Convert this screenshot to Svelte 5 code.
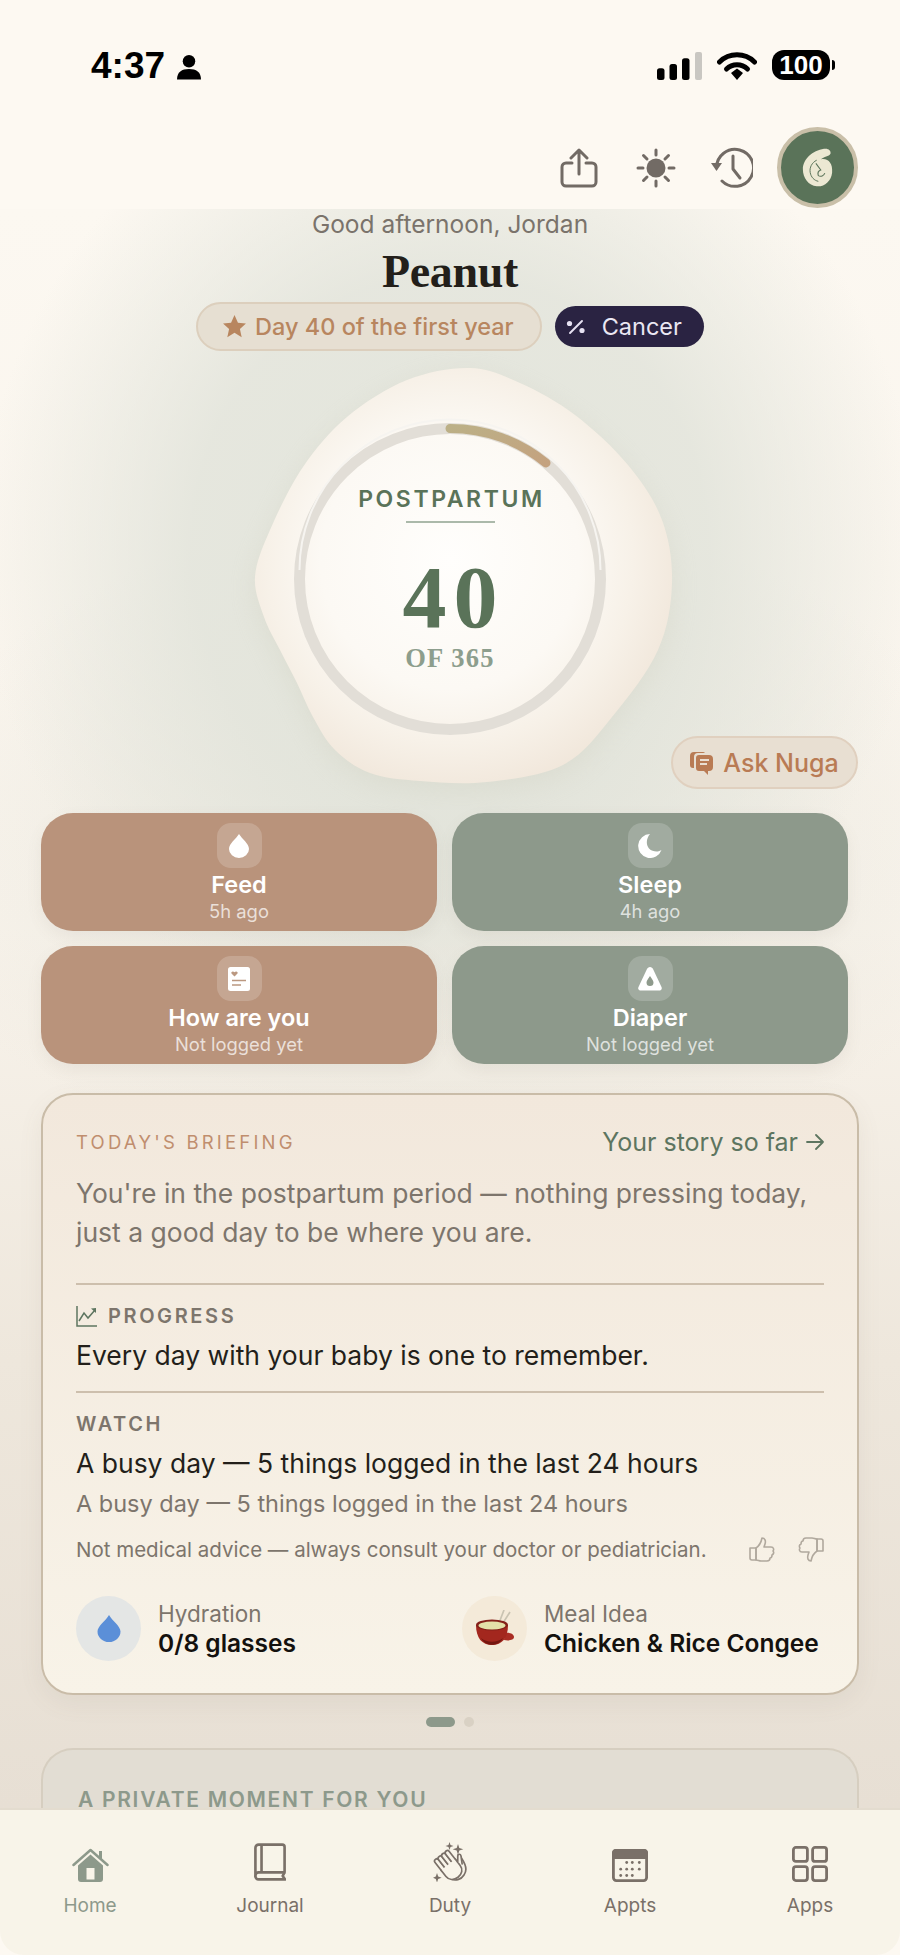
<script>
  const blobPts = [[470,368],[520,383],[575,415],[628,465],[662,520],[672,583],[658,650],[612,717],[563,765],[487,782],[420,781],[370,773],[335,750],[313,717],[297,683],[280,650],[264,617],[255,577],[270,530],[303,467],[347,417],[407,380]];
  function smooth(pts) {
    const n = pts.length;
    let d = `M${pts[0][0]} ${pts[0][1]}`;
    for (let i = 0; i < n; i++) {
      const p0 = pts[(i - 1 + n) % n], p1 = pts[i], p2 = pts[(i + 1) % n], p3 = pts[(i + 2) % n];
      const c1 = [p1[0] + (p2[0] - p0[0]) / 6, p1[1] + (p2[1] - p0[1]) / 6];
      const c2 = [p2[0] - (p3[0] - p1[0]) / 6, p2[1] - (p3[1] - p1[1]) / 6];
      d += `C${c1[0].toFixed(1)} ${c1[1].toFixed(1)} ${c2[0].toFixed(1)} ${c2[1].toFixed(1)} ${p2[0]} ${p2[1]}`;
    }
    return d + 'Z';
  }
  const blobPath = smooth(blobPts);
  const fingers = [8, 12.5, 17, 21.5];
  const apptDots = [[14.7,12],[20.3,12],[27.3,12],[8.7,18.7],[14.7,18.7],[20.3,18.7],[27.3,18.7],[8.7,25],[14.7,25],[20.3,25]];
</script>

<div class="page">
  <header class="top">
    <div class="status">
      <div class="time"><span>4:37</span>
        <svg width="24" height="26" viewBox="0 0 25 26"><circle cx="12.5" cy="7" r="6.5" fill="#000"/><path d="M0 26c0-8 5-11 12.5-11S25 18 25 26z" fill="#000"/></svg>
      </div>
      <div class="sys">
        <svg width="45" height="28" viewBox="0 0 45 28"><rect x="0" y="16.300" width="7.500" height="11.700" rx="2.500" fill="#000"/><rect x="12.500" y="12" width="7.500" height="16" rx="2.500" fill="#000"/><rect x="25" y="6.300" width="7.500" height="21.700" rx="2.500" fill="#000"/><rect x="38" y="0" width="7" height="28" rx="2" fill="#c9c7c2"/></svg>
        <svg width="40" height="28" viewBox="0 0 40 28"><path d="M2.500 10a25 25 0 0 1 35 0" fill="none" stroke="#000" stroke-width="5" stroke-linecap="round"/><path d="M9.500 17a15 15 0 0 1 21 0" fill="none" stroke="#000" stroke-width="5" stroke-linecap="round"/><path d="M14 21l6-4.500 6 4.500-6 7z" fill="#000"/></svg>
        <div class="batt"><span>100</span></div>
      </div>
    </div>
    <div class="tools">
      <svg class="t-share" width="38" height="40" viewBox="0 0 38 40" fill="none" stroke="#726b65" stroke-width="3" stroke-linecap="round" stroke-linejoin="round"><path d="M12 15H6a4 4 0 0 0-4 4v15a4 4 0 0 0 4 4h26a4 4 0 0 0 4-4V19a4 4 0 0 0-4-4h-6"/><path d="M19 26V3M11 10l8-8 8 8"/></svg>
      <svg class="t-sun" width="40" height="40" viewBox="0 0 40 40" fill="none" stroke="#726b65" stroke-width="3" stroke-linecap="round"><circle cx="20" cy="20" r="9.500" fill="#726b65" stroke="none"/><path d="M20 2v5M20 33v5M2 20h5M33 20h5M7.500 7.500l3.500 3.500M29 29l3.500 3.500M7.500 32.500L11 29M29 11l3.500-3.500"/></svg>
      <svg class="t-hist" width="42" height="42" viewBox="0 0 42 42" fill="none" stroke="#726b65" stroke-width="3" stroke-linecap="round" stroke-linejoin="round"><path d="M5.500 21A18.500 18.500 0 1 1 11 34"/><path d="M22 9v13l7 9"/><path d="M0 16h11l-5.500 8z" fill="#726b65" stroke="none"/></svg>
      <div class="avatar">
        <svg width="31" height="39" viewBox="0 0 38 48"><path d="M27 1c5-1 9 2 8 6-2 4-8 3-12 7 9-2 15 5 14 16-1 11-10 18-19 17C8 46 1 37 1 26 1 14 13 3 27 1z" fill="#ece8d3"/><path d="M18 15c-6 3-9 9-8 15 1 6 5 10 10 11" fill="none" stroke="#5a7359" stroke-width="1.200"/><path d="M17 19l6 8c-3 1-4 4-3 7 3 2 7 0 8-3" fill="none" stroke="#5a7359" stroke-width="1.300"/></svg>
      </div>
    </div>
  </header>

  <main class="scroll">
    <div class="hello">
      <p class="greet">Good afternoon, Jordan</p>
      <h1 class="name">Peanut</h1>
      <div class="pills">
        <div class="pill-day">
          <svg width="25" height="25" viewBox="0 0 24 24"><path d="M12 1l3.300 7.300 7.700.8-5.800 5.300 1.700 8L12 18l-6.900 4.400 1.700-8L1 9.100l7.700-.8z" fill="#b8865f"/></svg>
          <span>Day 40 of the first year</span>
        </div>
        <div class="pill-sign">
          <svg width="20" height="16" viewBox="0 0 20 16" fill="none" stroke="#e7e2f2" stroke-width="1.900" stroke-linecap="round"><circle cx="3.500" cy="4.500" r="2.600" fill="#e7e2f2" stroke="none"/><circle cx="16" cy="11.500" r="2.600" fill="#e7e2f2" stroke="none"/><path d="M16 2L4 14"/></svg>
          <span>Cancer</span>
        </div>
      </div>
    </div>

    <section class="hero">
      <svg class="blob" width="900" height="470" viewBox="0 340 900 470">
        <defs>
          <radialGradient id="bf" gradientUnits="userSpaceOnUse" cx="450" cy="560" r="235">
            <stop offset="0" stop-color="#fffefc"/>
            <stop offset=".55" stop-color="#fcf9f4"/>
            <stop offset=".78" stop-color="#f7f1e8"/>
            <stop offset="1" stop-color="#f1e7db"/>
          </radialGradient>
          <linearGradient id="arc" x1="0" x2="1" y1="0" y2="1">
            <stop offset="0" stop-color="#bcb087"/>
            <stop offset="1" stop-color="#c4a27f"/>
          </linearGradient>
          <filter id="sh" x="-20%" y="-20%" width="140%" height="140%"><feGaussianBlur stdDeviation="14"/></filter>
        </defs>
        <path d={blobPath} fill="#c9c9b8" opacity=".3" transform="translate(0 8)" filter="url(#sh)"/>
        <path d={blobPath} fill="url(#bf)"/>
        <circle cx="450" cy="579" r="150.500" fill="none" stroke="#e2ded7" stroke-width="11"/>
        <path d="M299.500 570A150.500 150.500 0 0 1 600.500 570" fill="none" stroke="#f6f4f0" stroke-width="2"/>
        <path d="M450 428.500A150.500 150.500 0 0 1 546 463" fill="none" stroke="url(#arc)" stroke-width="9" stroke-linecap="round"/>
      </svg>
      <div class="dial">
        <div class="phase">POSTPARTUM</div>
        <div class="rule"></div>
        <div class="num">40</div>
        <div class="of">OF 365</div>
      </div>
      <button class="ask">
        <svg width="23" height="24" viewBox="0 0 23 24"><path d="M4 1h9a3 3 0 0 1 2 1H8a4 4 0 0 0-4 4v11H3a3 3 0 0 1-3-3V5a4 4 0 0 1 4-4z" fill="#b97b54"/><path d="M9 4h10a4 4 0 0 1 4 4v8a4 4 0 0 1-4 4h-1v4l-4-4H9a3 3 0 0 1-3-3V7a3 3 0 0 1 3-3z" fill="#b97b54"/><path d="M10 9h9M10 13h7" stroke="#eadfd2" stroke-width="2"/></svg>
        <span>Ask Nuga</span>
      </button>
    </section>

    <section class="actions">
      <div class="act terra">
        <div class="ico"><svg width="22" height="24" viewBox="0 0 22 24"><path d="M11 0c3 5 10 9.500 10 15a10 9 0 0 1-20 0C1 9.500 8 5 11 0z" fill="#fff"/></svg></div>
        <div class="lbl">Feed</div><div class="sub">5h ago</div>
      </div>
      <div class="act sage">
        <div class="ico"><svg width="24" height="24" viewBox="0 0 24 24"><path d="M12 0a12 12 0 1 0 11.500 16C21 18 15 18.500 11 14.500 7.500 10.500 8.500 4 12 0z" fill="#fff"/></svg></div>
        <div class="lbl">Sleep</div><div class="sub">4h ago</div>
      </div>
      <div class="act terra">
        <div class="ico"><svg width="22" height="24" viewBox="0 0 22 24"><rect width="22" height="24" rx="2.500" fill="#fff"/><path d="M6.500 9.500L3.500 6.500c-1-1.500 1.500-3 3-1.200C8 3.500 10.500 5 9.500 6.500z" fill="#bb9880"/><path d="M4 13.500h14M4 18h9" stroke="#bb9880" stroke-width="1.600"/></svg></div>
        <div class="lbl">How are you</div><div class="sub">Not logged yet</div>
      </div>
      <div class="act sage">
        <div class="ico"><svg width="24" height="24" viewBox="0 0 24 24"><path d="M12 0c1.500 0 2.500 1 3 2l8.500 18c.8 2-.5 3.500-2.500 3.500H3c-2 0-3.300-1.500-2.500-3.500L9 2c.5-1 1.500-2 3-2z" fill="#fff"/><path d="M12 9c1.500 2.500 3.500 4.500 3.500 6.500a3.500 3.500 0 0 1-7 0C8.500 13.500 10.500 11.500 12 9z" fill="#8e9a8c"/></svg></div>
        <div class="lbl">Diaper</div><div class="sub">Not logged yet</div>
      </div>
    </section>

    <section class="brief">
      <div class="brief-head">
        <span class="eyebrow">TODAY'S BRIEFING</span>
        <span class="story">Your story so far <svg width="18" height="16" viewBox="0 0 18 16" fill="none" stroke="#5d7560" stroke-width="1.800" stroke-linecap="round" stroke-linejoin="round"><path d="M1 8h16M10 1l7 7-7 7"/></svg></span>
      </div>
      <p class="lead">You're in the postpartum period — nothing pressing today, just a good day to be where you are.</p>
      <div class="block progress">
        <div class="kicker">
          <svg width="21" height="21" viewBox="0 0 21 21" fill="none" stroke="#5d7560" stroke-width="1.500"><path d="M1 0v20h20"/><path d="M3 15l5-8 4 5 7-8"/><path d="M15 2.500l5-.5v5z" fill="#5d7560" stroke="none"/></svg>
          <span>PROGRESS</span>
        </div>
        <p class="main">Every day with your baby is one to remember.</p>
      </div>
      <div class="block watch">
        <div class="kicker"><span>WATCH</span></div>
        <p class="main">A busy day — 5 things logged in the last 24 hours</p>
        <p class="second">A busy day — 5 things logged in the last 24 hours</p>
      </div>
      <div class="note">
        <span>Not medical advice — always consult your doctor or pediatrician.</span>
        <div class="thumbs">
          <svg width="26" height="25" viewBox="0 0 26 25" fill="none" stroke="#b0a89d" stroke-width="1.600" stroke-linejoin="round"><path d="M7 11c3-2 5-5 6-10 3 0 4 3 3 6l-1 3h7c3 0 3 3 2 4 1 1 1 3-1 4 0 2-1 3-2 3 0 2-1 3-3 3H12c-2 0-3-1-5-1z"/><path d="M1 11h6v12H3c-1 0-2-1-2-2z"/></svg>
          <svg width="26" height="25" viewBox="0 0 26 25" fill="none" stroke="#b0a89d" stroke-width="1.600" stroke-linejoin="round"><path d="M19 14c-3 2-5 5-6 10-3 0-4-3-3-6l1-3H4c-3 0-3-3-2-4-1-1-1-3 1-4 0-2 1-3 2-3 0-2 1-3 3-3h6c2 0 3 1 5 1z"/><path d="M25 14h-6V2h4c1 0 2 1 2 2z"/></svg>
        </div>
      </div>
      <div class="tips">
        <div class="tip">
          <div class="bub water"><svg width="24" height="27" viewBox="0 0 24 27"><path d="M12 0c3 5.500 11.500 11 11.500 16.500a11.500 10.500 0 0 1-23 0C.5 11 9 5.500 12 0z" fill="#5b8fd8"/></svg></div>
          <div class="tip-txt"><div class="t1">Hydration</div><div class="t2">0/8 glasses</div></div>
        </div>
        <div class="tip meal">
          <div class="bub food">
            <svg width="40" height="38" viewBox="0 0 40 38">
              <path d="M24 13l5-13M28 13l7-11" stroke="#c9c3b2" stroke-width="1.700"/>
              <path d="M30 23c4-1 9 1 9 4s-5 4-10 3z" fill="#a92d24"/>
              <path d="M1 15c0 13 6 20 16 20s16-7 16-20z" fill="#a3271e"/>
              <path d="M6 28c6 5 16 5 22 0-4 9-18 9-22 0z" fill="#741711"/>
              <ellipse cx="17" cy="15" rx="16" ry="5.500" fill="#842019"/>
              <ellipse cx="17" cy="15.500" rx="13.500" ry="4" fill="#e4e0a8"/>
            </svg>
          </div>
          <div class="tip-txt"><div class="t1">Meal Idea</div><div class="t2">Chicken &amp; Rice Congee</div></div>
        </div>
      </div>
    </section>

    <div class="dots"><i class="on"></i><i></i></div>

    <section class="moment">
      <div class="moment-t">A PRIVATE MOMENT FOR YOU</div>
    </section>
  </main>

  <nav class="tabs">
    <div class="tab home">
      <svg width="37" height="34" viewBox="0 0 37 34"><path d="M1.500 17L18.500 2 35.500 17" fill="none" stroke="#8d998b" stroke-width="2.500" stroke-linejoin="round" stroke-linecap="round"/><rect x="27" y="3" width="3" height="8" fill="#8d998b"/><path d="M6 17.500L18.500 6.500 31 17.500V31a3 3 0 0 1-3 3H9a3 3 0 0 1-3-3z" fill="#8d998b"/><rect x="14.500" y="20" width="8" height="11.500" fill="#f8f4e9"/></svg>
      <span>Home</span>
    </div>
    <div class="tab">
      <svg width="32" height="40" viewBox="0 0 34 40" fill="none" stroke="#7a7068" stroke-width="2.800" stroke-linejoin="round"><path d="M5 1.500h25a2.500 2.500 0 0 1 2.500 2.500V31H5a3.500 3.500 0 0 0-3.500 3.500V5A3.500 3.500 0 0 1 5 1.500z"/><path d="M8 2v29"/><path d="M1.500 34.500A3.500 3.500 0 0 0 5 38.500h28l-2.500-3.700 2-3.800"/></svg>
      <span>Journal</span>
    </div>
    <div class="tab">
      <svg width="35" height="40" viewBox="0 0 35 40" fill="none" stroke="#7a7068" stroke-width="1.700" stroke-linejoin="round" stroke-linecap="round">
        <path d="M25 13c2 0 3 2 4 4 4 6 5 12 2 16-3 5-9 6-13 4"/>
        <g transform="rotate(-38 17 25)">
          {#each fingers as x}<rect x={x} y="10" width="4.500" height="15" rx="2.250" fill="#f8f4e9"/>{/each}
          <path d="M8 22v8c0 5 4 8 9 8s9-3 9-8v-8" fill="#f8f4e9"/>
          <path d="M26 26l4-5c1.500-1.500 3.500 0 2.500 2l-4 7" fill="#f8f4e9"/>
        </g>
        <path d="M16.500 0l1 3 3 1-3 1-1 3-1-3-3-1 3-1z" fill="#7a7068" stroke="none"/>
        <path d="M25 2l1.300 4 4 1.300-4 1.300-1.300 4.400-1.300-4.400-4-1.300 4-1.300z" fill="#7a7068" stroke="none"/>
        <path d="M4 31l1.200 3.500 3.500 1.200-3.500 1.200L4 40.500l-1.200-3.600-2.800-1.200 2.800-1.200z" fill="#7a7068" stroke="none"/>
      </svg>
      <span>Duty</span>
    </div>
    <div class="tab">
      <svg width="36" height="33" viewBox="0 0 36 33"><path d="M4 0h28a4 4 0 0 1 4 4v6H0V4a4 4 0 0 1 4-4z" fill="#7a7068"/><rect x="1.400" y="1.400" width="33.200" height="30.200" rx="3" fill="none" stroke="#7a7068" stroke-width="2.800"/>{#each apptDots as d}<circle cx={d[0]} cy={d[1] + 1.500} r="1.400" fill="#7a7068"/>{/each}</svg>
      <span>Appts</span>
    </div>
    <div class="tab">
      <svg width="36" height="36" viewBox="0 0 36 36" fill="none" stroke="#7a7068" stroke-width="2.800"><rect x="1.400" y="1.400" width="14" height="14" rx="2.500"/><rect x="20.600" y="1.400" width="14" height="14" rx="2.500"/><rect x="1.400" y="20.600" width="14" height="14" rx="2.500"/><rect x="20.600" y="20.600" width="14" height="14" rx="2.500"/></svg>
      <span>Apps</span>
    </div>
  </nav>
</div>

<style>
  :global(body) { margin: 0; background: #fdf9f2; }
  .page {
    width: 900px; height: 1955px; display: flex; flex-direction: column; overflow: hidden;
    font-family: Inter, "Liberation Sans", sans-serif; background: #fdf9f2; color: #231f1a;
  }
  p { margin: 0; }
  h1 { margin: 0; }

  .top { height: 209px; flex: none; box-sizing: border-box; }
  .status { display: flex; justify-content: space-between; padding: 48px 70px 0 91px; height: 79px; box-sizing: border-box; }
  .time { display: flex; align-items: flex-start; gap: 12px; font-weight: 600; font-size: 37px; line-height: 36px; color: #000; font-family: "Liberation Sans", Inter, sans-serif; }
  .time svg { margin-top: 6px; }
  .sys { display: flex; gap: 15px; align-items: flex-start; padding-top: 4px; }
  .batt { width: 58px; height: 30px; border-radius: 12px; background: #000; color: #fff; font: 700 26px/30px "Liberation Sans", sans-serif; text-align: center; position: relative; margin-top: -2px; }
  .batt::after { content: ""; position: absolute; right: -5px; top: 10px; width: 3px; height: 10px; background: #000; border-radius: 0 3px 3px 0; }
  .tools { display: flex; align-items: center; justify-content: flex-end; padding: 48px 42px 0 0; height: 81px; }
  .t-share { margin-right: 38px; }
  .t-sun { margin-right: 35px; }
  .t-hist { margin-right: 24px; }
  .avatar { width: 81px; height: 81px; box-sizing: border-box; border-radius: 50%; background: #5a7359; border: 4px solid #c9bfa8; display: flex; align-items: center; justify-content: center; }

  .scroll {
    flex: 1; min-height: 0; overflow: hidden; position: relative; display: flex; flex-direction: column;
    background:
      radial-gradient(ellipse 470px 500px at 50% 340px, rgba(225,228,219,.95) 0%, rgba(226,228,219,.85) 55%, rgba(228,228,219,0) 100%),
      radial-gradient(ellipse 560px 340px at 50% 640px, rgba(224,224,214,.75) 0%, rgba(226,224,214,0) 100%),
      linear-gradient(180deg, #fcf8f1 0%, #f8f3eb 45%, #eee7dc 72%, #e7dfd4 100%);
  }
  .hello { display: flex; flex-direction: column; align-items: center; }
  .greet { font-size: 24.500px; line-height: 30px; color: #7a736b; }
  .name { font: 700 46px/50px "Liberation Serif", "DejaVu Serif", serif; color: #231f1a; margin-top: 8px; letter-spacing: -.3px; }
  .pills { display: flex; align-items: center; gap: 13px; margin-top: 5px; }
  .pill-day { display: flex; align-items: center; gap: 8px; height: 49px; box-sizing: border-box; padding: 0 26px 0 24px; border-radius: 25px; background: #e6dfd2; border: 2px solid #dccfbd; color: #b8865f; font-size: 23.500px; font-weight: 500; }
  .pill-sign { display: flex; align-items: center; gap: 16px; height: 41px; padding: 0 22px 0 11px; border-radius: 21px; background: #2a2342; color: #ebe7f3; font-size: 23.500px; }

  .hero { position: relative; height: 451px; flex: none; display: flex; flex-direction: column; align-items: center; }
  .blob { position: absolute; left: 0; top: -11px; pointer-events: none; }
  .dial { position: relative; display: flex; flex-direction: column; align-items: center; padding-top: 134px; }
  .phase { font-size: 23px; font-weight: 600; letter-spacing: 2.600px; color: #5a7359; line-height: 28px; margin-right: -3px; }
  .rule { width: 89px; height: 2px; background: #abb9aa; margin-top: 8px; }
  .num { font: 700 88px/66px "Liberation Serif", serif; color: #5a7359; margin-top: 42px; letter-spacing: 7px; margin-right: -7px; }
  .of { font: 700 26.500px/30px "Liberation Serif", serif; color: #8d9e8d; letter-spacing: 1.200px; margin-top: 12px; }
  .ask { position: absolute; right: 42px; top: 385px; width: 187px; height: 53px; box-sizing: border-box; display: flex; align-items: center; justify-content: center; gap: 10px; border-radius: 27px; background: #e8dfd2; border: 2px solid #e0d0bf; color: #b97b54; font: 500 25px Inter, sans-serif; padding: 0; }

  .actions { display: grid; grid-template-columns: 396px 396px; column-gap: 15px; row-gap: 15px; padding: 0 0 0 41px; margin-top: 11px; flex: none; }
  .act { height: 118px; border-radius: 32px; display: flex; flex-direction: column; align-items: center; color: #fff; box-shadow: 0 6px 16px rgba(120,105,85,.08); }
  .terra { background: #b9937b; }
  .sage { background: #8d998b; }
  .ico { width: 45px; height: 45px; margin-top: 10px; border-radius: 14px; background: rgba(255,255,255,.18); display: flex; align-items: center; justify-content: center; }
  .lbl { font-size: 23.500px; font-weight: 600; line-height: 28px; margin-top: 3px; }
  .sub { font-size: 18.400px; line-height: 22px; color: rgba(255,255,255,.72); margin-top: 1px; }

  .brief { margin: 29px 41px 0; width: 818px; height: 602px; flex: none; box-sizing: border-box; border: 2px solid #c9bca8; border-radius: 32px; padding: 33px 33px 0 33px; background: linear-gradient(180deg, #f2e8dc 0%, #f8f3e8 100%); box-shadow: 0 8px 24px rgba(120,105,85,.08); }
  .brief-head { display: flex; justify-content: space-between; align-items: center; height: 28px; }
  .eyebrow { font-size: 18.500px; letter-spacing: 3.200px; color: #c08e6e; }
  .story { font-size: 25px; font-weight: 400; color: #5d7560; display: flex; align-items: center; gap: 8px; }
  .lead { font-size: 26.500px; line-height: 38.500px; color: #7d756c; margin-top: 18px; }
  .block { border-top: 2px solid #cdbfad; }
  .progress { margin-top: 32px; padding-top: 19px; height: 108px; box-sizing: border-box; }
  .watch { padding-top: 19px; height: 137px; box-sizing: border-box; }
  .kicker { display: flex; align-items: center; gap: 11px; font-size: 20px; line-height: 24px; font-weight: 600; letter-spacing: 2.600px; color: #7d756c; }
  .main { font-size: 26.500px; line-height: 34px; color: #231f1a; margin-top: 10px; }
  .second { font-size: 23.500px; line-height: 30px; color: #7d756c; margin-top: 9px; }
  .note { display: flex; justify-content: space-between; align-items: center; font-size: 20.500px; color: #7d756c; margin-top: 6px; height: 30px; }
  .thumbs { display: flex; gap: 23px; }
  .tips { display: flex; margin-top: 32px; }
  .tip { display: flex; align-items: center; gap: 17px; width: 386px; flex: none; }
  .meal { width: auto; }
  .bub { width: 65px; height: 65px; border-radius: 50%; display: flex; align-items: center; justify-content: center; flex: none; }
  .water { background: #e4e6e5; }
  .food { background: #f4ead9; }
  .tip-txt { white-space: nowrap; }
  .t1 { font-size: 22.500px; line-height: 29px; color: #7d756c; }
  .t2 { font-size: 24.500px; line-height: 30px; font-weight: 600; color: #14110e; }

  .dots { display: flex; justify-content: center; gap: 9px; margin-top: 22px; flex: none; }
  .dots i { width: 10px; height: 10px; border-radius: 5px; background: #d9d1c4; display: block; }
  .dots i.on { width: 29px; background: #8d998b; }

  .moment { margin: 21px 41px 0; border: 2px solid #d6cec0; border-bottom: 0; border-radius: 32px 32px 0 0; background: #e2ddd3; flex: 1; box-sizing: border-box; padding: 37px 35px 0; }
  .moment-t { font-size: 21px; font-weight: 600; letter-spacing: 1.700px; color: #8d998b; line-height: 26px; white-space: nowrap; }

  .tabs { height: 147px; flex: none; box-sizing: border-box; border-top: 2px solid #e3dccf; background: #f8f4e9; display: grid; grid-template-columns: repeat(5, 1fr); border-radius: 0 0 24px 24px; }
  .tab { height: 108px; display: flex; flex-direction: column; align-items: center; justify-content: flex-end; gap: 12px; font-size: 19px; line-height: 24px; color: #7a7068; }
  .tab.home { color: #8d998b; }
</style>
